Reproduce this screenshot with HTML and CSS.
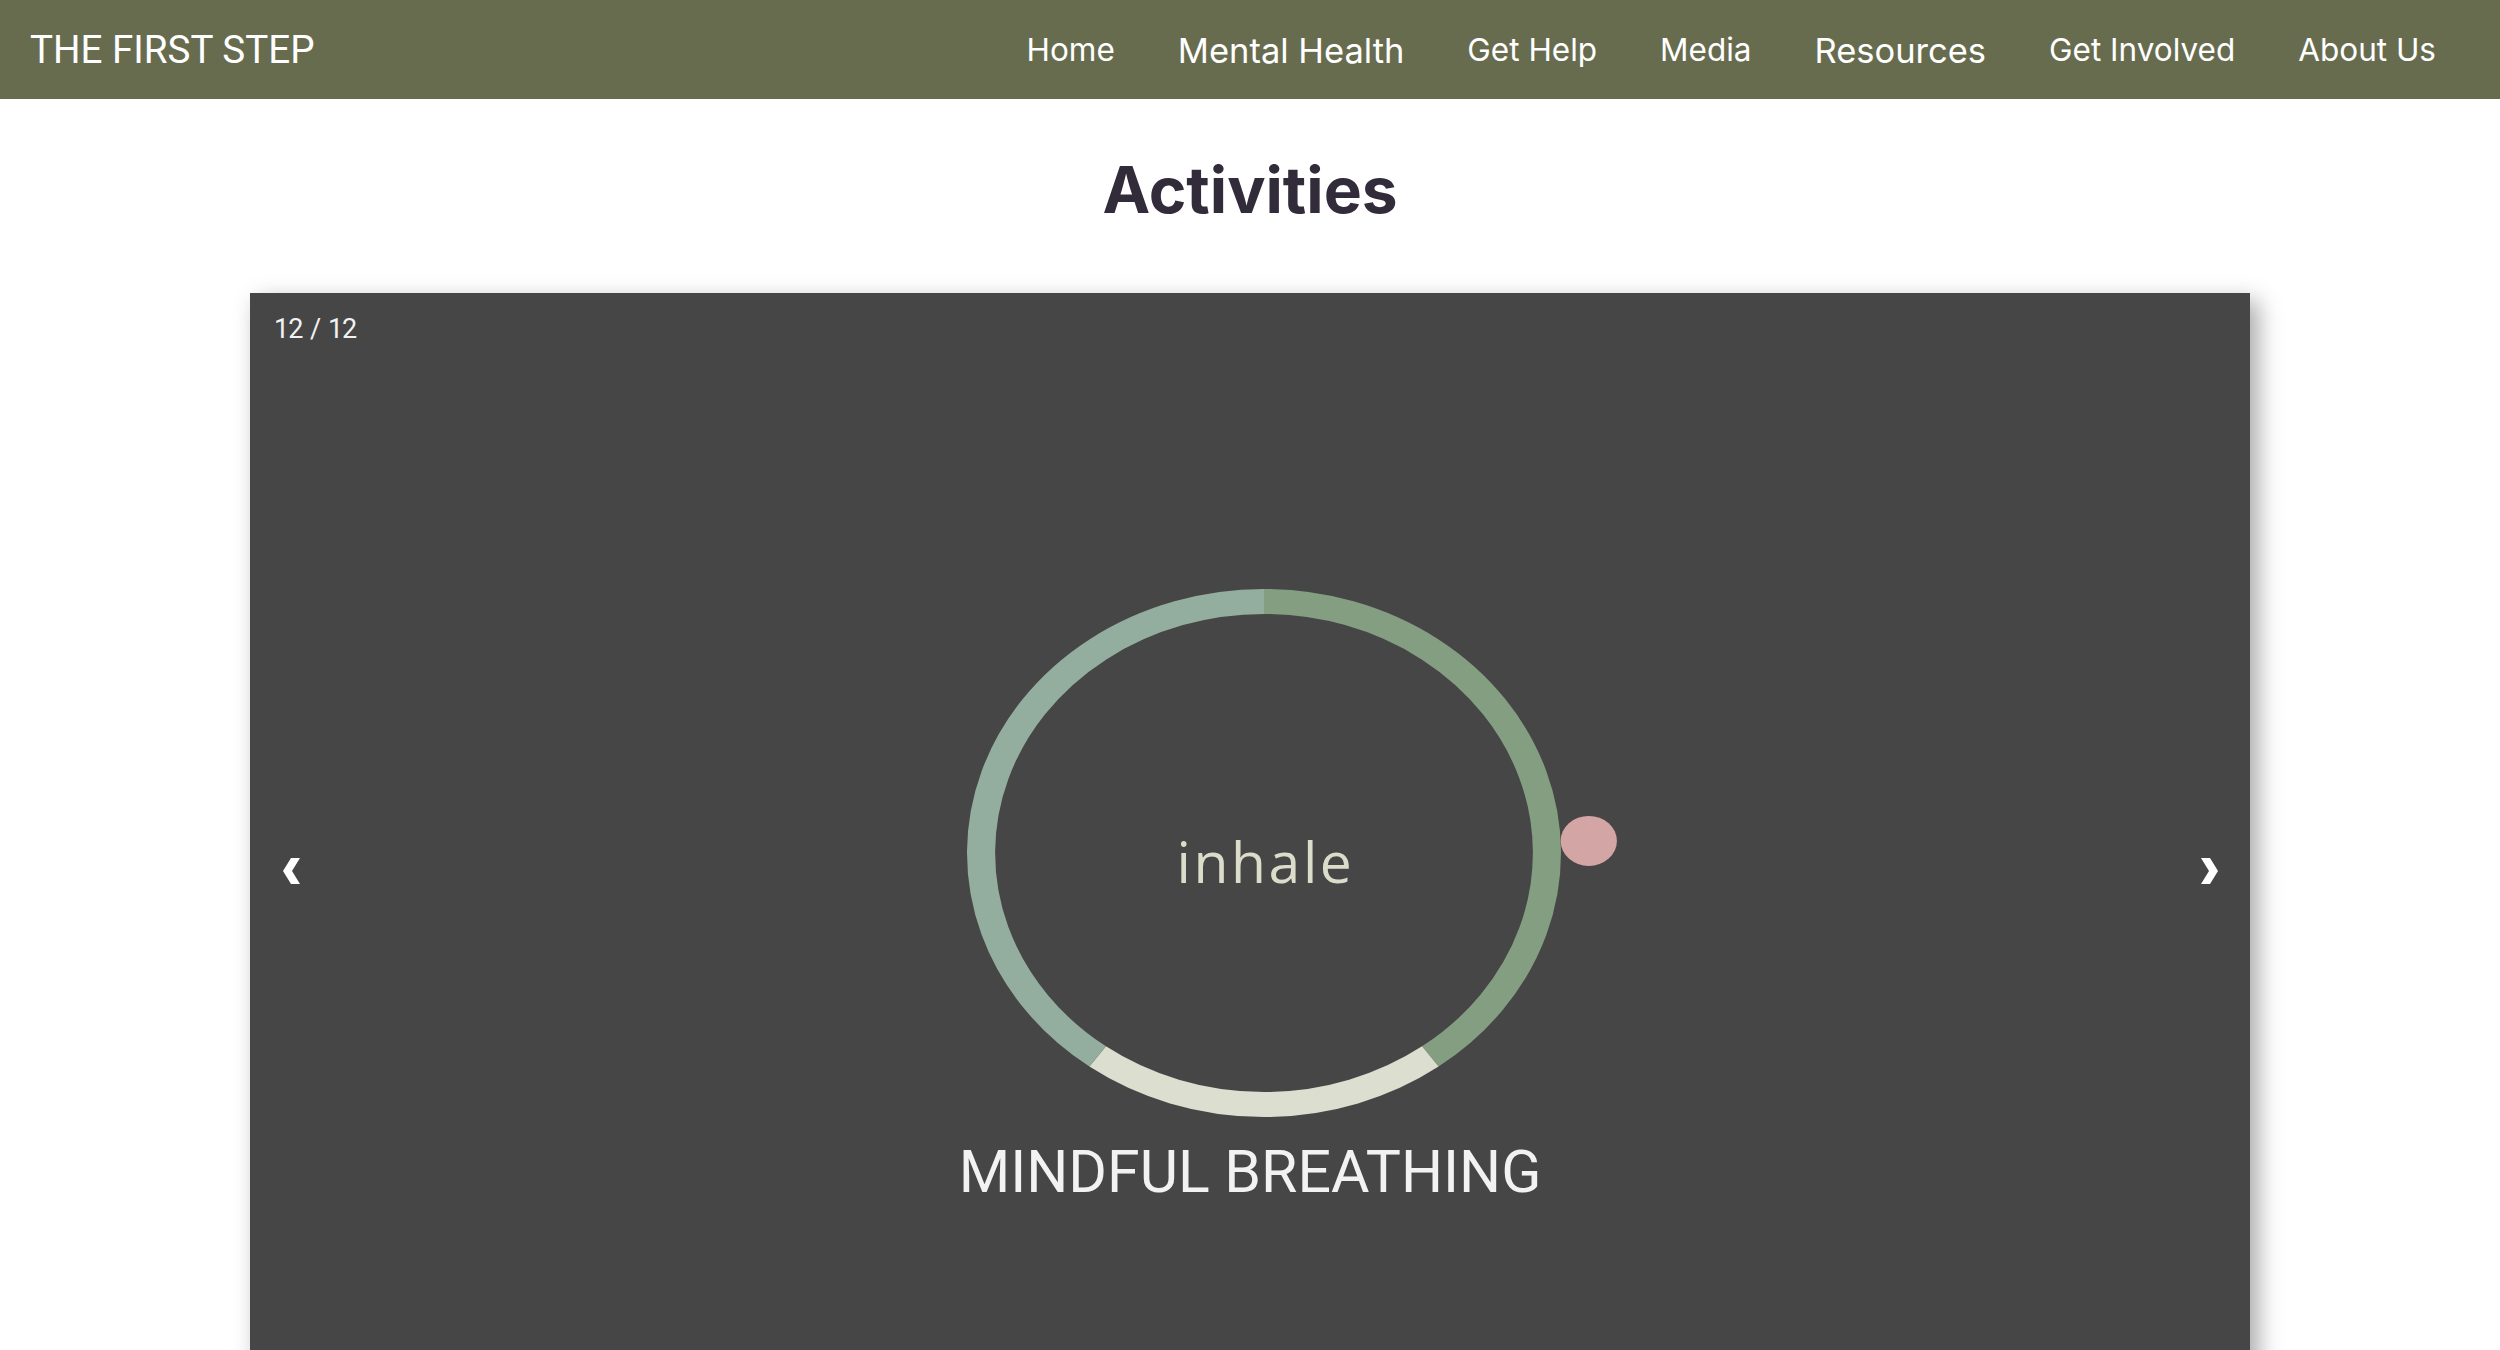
FILE: index.html
```html
<!DOCTYPE html>
<html lang="en">
<head>
<meta charset="utf-8">
<title>Activities - The First Step</title>
<link rel="stylesheet" href="styles.css">
</head>
<body>
<header class="topbar">
  <a class="brand" href="#">THE FIRST STEP</a>
  <nav class="nav">
    <a class="nav-link" href="#">Home</a>
    <a class="nav-link nav-link--menu" href="#">Mental Health</a>
    <a class="nav-link" href="#">Get Help</a>
    <a class="nav-link" href="#">Media</a>
    <a class="nav-link nav-link--menu" href="#">Resources</a>
    <a class="nav-link" href="#">Get Involved</a>
    <a class="nav-link" href="#">About Us</a>
  </nav>
</header>
<main class="page">
  <h1 class="page-title">Activities</h1>
  <section class="slideshow">
    <div class="numbertext">12 / 12</div>
    <button class="arrow arrow--prev" aria-label="Previous">
      <svg width="17" height="26" viewBox="0 0 17 26"><polygon points="8,0 17,0 9,13 17,26 8,26 0,13" fill="#fff"/></svg>
    </button>
    <div class="slide">
      <div class="breath">
        <svg class="breath-ring" viewBox="0 0 528 528" preserveAspectRatio="none">
          <path d="M264 12.5 A251.5 251.5 0 0 1 411.83 467.46" fill="none" stroke="#839e80" stroke-width="25"/>
          <path d="M411.83 467.46 A251.5 251.5 0 0 1 116.17 467.46" fill="none" stroke="#dcdecf" stroke-width="25"/>
          <path d="M116.17 467.46 A251.5 251.5 0 0 1 264 12.5" fill="none" stroke="#93ae9f" stroke-width="25"/>
          <circle cx="552.7" cy="251.9" r="25" fill="#d4a5a5"/>
        </svg>
        <span class="breath-word">inhale</span>
      </div>
      <div class="caption">MINDFUL BREATHING</div>
    </div>
    <button class="arrow arrow--next" aria-label="Next">
      <svg width="17" height="26" viewBox="0 0 17 26"><polygon points="0,0 9,0 17,13 9,26 0,26 8,13" fill="#fff"/></svg>
    </button>
  </section>
</main>
</body>
</html>
```

FILE: styles.css
```css
* { box-sizing: border-box; }

body {
  margin: 0;
  background: #ffffff;
  font-family: Roboto, "Liberation Sans", sans-serif;
}

.topbar {
  display: flex;
  align-items: center;
  justify-content: space-between;
  height: 99px;
  padding: 0 64px 0 30px;
  background: #686c4f;
}

.brand {
  font-family: Roboto, "Liberation Sans", sans-serif;
  font-size: 38.6px;
  color: #ffffff;
  text-decoration: none;
}

.nav {
  display: flex;
  align-items: center;
  gap: 63px;
}

.nav-link {
  font-family: Inter, "Liberation Sans", sans-serif;
  font-size: 31.5px;
  color: #ffffff;
  text-decoration: none;
}

.nav-link--menu {
  font-size: 34.5px;
  padding-top: 1px;
}

.page-title {
  margin: 0;
  padding: 52px 0 65px;
  text-align: center;
  font-family: Inter, "Liberation Sans", sans-serif;
  font-weight: 700;
  font-size: 64px;
  line-height: 77px;
  color: #322b3a;
}

.slideshow {
  position: relative;
  width: 2000px;
  margin: 0 auto;
  padding: 296px 0 200px;
  background: #464646;
  box-shadow: 8px 8px 22px rgba(0, 0, 0, 0.35);
}

.numbertext {
  position: absolute;
  top: 0;
  left: 0;
  padding: 20px 24px;
  font-family: Roboto, "Liberation Sans", sans-serif;
  font-size: 27px;
  letter-spacing: -1px;
  word-spacing: 2px;
  color: #f2f2f2;
}

.arrow {
  position: absolute;
  top: 549px;
  padding: 16px;
  border: 0;
  background: none;
  cursor: pointer;
  line-height: 0;
}

.arrow svg { display: block; }

.arrow--prev { left: 17px; }
.arrow--next { right: 16px; }

.slide {
  display: flex;
  flex-direction: column;
  align-items: center;
}

.breath {
  position: relative;
  width: 594px;
  height: 528px;
  margin-left: 28px;
}

.breath-ring {
  display: block;
  width: 594px;
  height: 528px;
  overflow: visible;
}

.breath-word {
  position: absolute;
  inset: 0;
  display: flex;
  align-items: center;
  justify-content: center;
  padding: 16px 0 0 3px;
  font-family: "Open Sans", "Liberation Sans", sans-serif;
  font-weight: 400;
  font-size: 57px;
  letter-spacing: 2.6px;
  color: #dcdccb;
}

.caption {
  margin-top: 20px;
  font-family: Roboto, "Liberation Sans", sans-serif;
  font-size: 59px;
  color: #f2f2f2;
}
```
